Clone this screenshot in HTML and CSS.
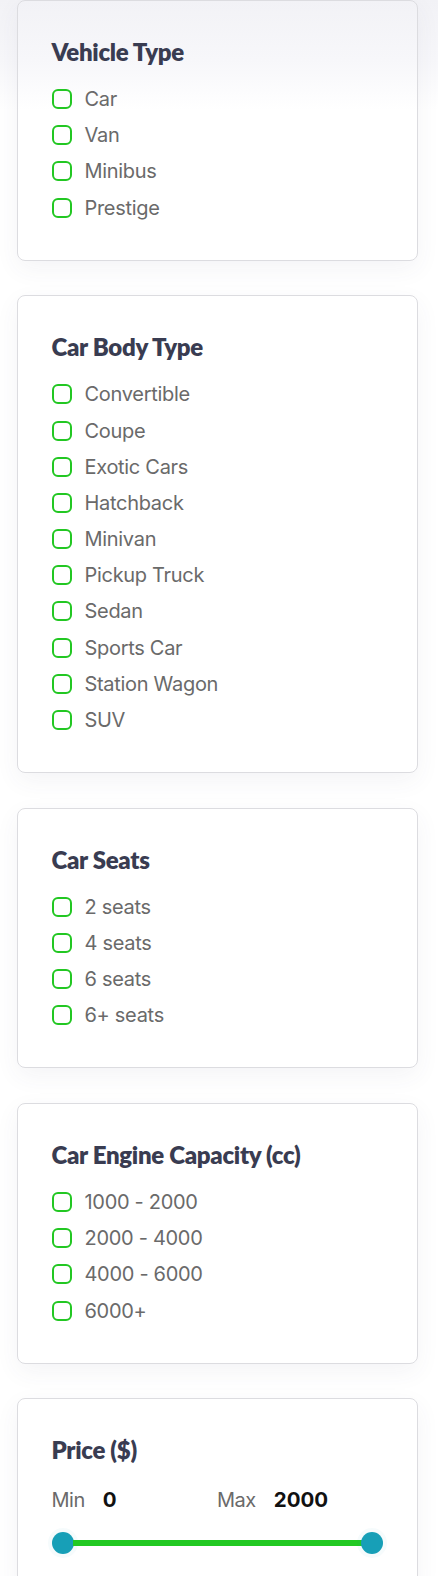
FILE: index.html
```html
<!DOCTYPE html>
<html lang="en">
<head>
<meta charset="utf-8">
<title>Filters</title>
<link rel="stylesheet" href="styles.css">
</head>
<body>
<div class="filters">
  <section class="card">
    <h3 class="card-title">Vehicle Type</h3>
    <ul class="options">
      <li class="option"><span class="box"></span><span class="label">Car</span></li>
      <li class="option"><span class="box"></span><span class="label">Van</span></li>
      <li class="option"><span class="box"></span><span class="label">Minibus</span></li>
      <li class="option"><span class="box"></span><span class="label">Prestige</span></li>
    </ul>
  </section>
  <section class="card">
    <h3 class="card-title">Car Body Type</h3>
    <ul class="options">
      <li class="option"><span class="box"></span><span class="label">Convertible</span></li>
      <li class="option"><span class="box"></span><span class="label">Coupe</span></li>
      <li class="option"><span class="box"></span><span class="label">Exotic Cars</span></li>
      <li class="option"><span class="box"></span><span class="label">Hatchback</span></li>
      <li class="option"><span class="box"></span><span class="label">Minivan</span></li>
      <li class="option"><span class="box"></span><span class="label">Pickup Truck</span></li>
      <li class="option"><span class="box"></span><span class="label">Sedan</span></li>
      <li class="option"><span class="box"></span><span class="label">Sports Car</span></li>
      <li class="option"><span class="box"></span><span class="label">Station Wagon</span></li>
      <li class="option"><span class="box"></span><span class="label">SUV</span></li>
    </ul>
  </section>
  <section class="card">
    <h3 class="card-title">Car Seats</h3>
    <ul class="options">
      <li class="option"><span class="box"></span><span class="label">2 seats</span></li>
      <li class="option"><span class="box"></span><span class="label">4 seats</span></li>
      <li class="option"><span class="box"></span><span class="label">6 seats</span></li>
      <li class="option"><span class="box"></span><span class="label">6+ seats</span></li>
    </ul>
  </section>
  <section class="card">
    <h3 class="card-title">Car Engine Capacity (cc)</h3>
    <ul class="options">
      <li class="option"><span class="box"></span><span class="label">1000 - 2000</span></li>
      <li class="option"><span class="box"></span><span class="label">2000 - 4000</span></li>
      <li class="option"><span class="box"></span><span class="label">4000 - 6000</span></li>
      <li class="option"><span class="box"></span><span class="label">6000+</span></li>
    </ul>
  </section>
  <section class="card">
    <h3 class="card-title">Price ($)</h3>
    <div class="range-values">
      <div class="range-value"><span class="range-label">Min</span><span class="range-num">0</span></div>
      <div class="range-value"><span class="range-label">Max</span><span class="range-num">2000</span></div>
    </div>
    <div class="slider">
      <span class="thumb"></span>
      <span class="track"></span>
      <span class="thumb"></span>
    </div>
  </section>
</div>
</body>
</html>
```
FILE: styles.css
```css
html {
  background: linear-gradient(to bottom, #f2f2f6 0px, #f7f7fa 60px, #ffffff 110px) no-repeat #ffffff;
  background-size: 100% 140px;
}
body {
  margin: 0;
  font-family: Inter, "Noto Sans", sans-serif;
}
.filters {
  display: flex;
  flex-direction: column;
  gap: 34.5px;
  padding: 0 0 40px 16.5px;
}
.card {
  width: 401px;
  box-sizing: border-box;
  border: 1px solid #dcdce0;
  border-radius: 8px;
  padding: 34px;
  background: transparent;
  box-shadow: 0 8px 24px rgba(60, 60, 110, 0.06);
}
.card-title {
  margin: 0 0 14px 0;
  padding-top: 2px;
  font-family: Lato, Inter, sans-serif;
  font-weight: 800;
  font-size: 24px;
  line-height: 30px;
  color: #393c51;
  letter-spacing: -0.3px;
}
.options {
  list-style: none;
  margin: 0;
  padding: 0;
}
.option {
  display: flex;
  align-items: center;
  gap: 13px;
  height: 36.2px;
}
.box {
  width: 20px;
  height: 20px;
  box-sizing: border-box;
  border: 2px solid #22c722;
  border-radius: 6px;
  flex: none;
}
.label {
  font-size: 20px;
  line-height: 24px;
  color: #6a6a6a;
  letter-spacing: -0.3px;
}
.range-values {
  display: grid;
  grid-template-columns: 1fr 1fr;
  margin-top: 23px;
  line-height: 24px;
}
.range-value {
  display: flex;
  align-items: baseline;
  gap: 18px;
}
.range-label {
  font-size: 20px;
  color: #6a6a6a;
  letter-spacing: -0.5px;
}
.range-num {
  font-size: 20.5px;
  font-weight: 700;
  color: #111111;
}
.slider {
  display: flex;
  align-items: center;
  margin-top: 20px;
}
.thumb {
  width: 22px;
  height: 22px;
  border-radius: 50%;
  background: #179fb7;
  flex: none;
  box-shadow: 0 0 0 4px rgba(23, 159, 183, 0.04);
}
.track {
  flex: 1;
  height: 6px;
  background: #22c922;
  margin: 0 -1px;
}
```
